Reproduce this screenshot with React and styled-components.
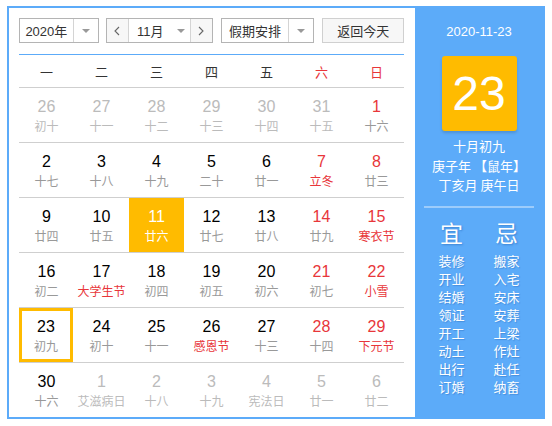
import React from "react";
import styled, { createGlobalStyle } from "styled-components";

const Global = createGlobalStyle`
  html, body { margin: 0; padding: 0; background: #fff; }
  body { padding: 6px 7px; font-family: "Liberation Sans", "Noto Sans CJK SC", sans-serif; }
`;

const BLUE = "#5cabf9";
const RED = "#e8363a";
const ORANGE = "#ffbb00";
const CJK = `"Liberation Sans", "Noto Sans CJK SC", sans-serif`;

const Widget = styled.div`
  width: 534px;
  height: 409px;
  border: 2px solid ${BLUE};
  display: flex;
  background: #fff;
`;

const Main = styled.div`
  width: 385px;
  padding: 10px 11px 0 10px;
  display: flex;
  flex-direction: column;
`;

const Toolbar = styled.div`
  display: flex;
  height: 25px;
  margin-bottom: 11px;
`;

const Select = styled.div`
  display: flex;
  width: ${(p) => p.$w}px;
  height: 25px;
  box-sizing: border-box;
  border: 1px solid #b4b4b4;
  margin-right: ${(p) => p.$mr || 0}px;
  font: 13px ${CJK};
  color: #333;
`;

const SelectText = styled.div`
  flex: 1;
  display: flex;
  align-items: center;
  justify-content: center;
`;

const ArrowBox = styled.div`
  width: 24px;
  border-left: 1px solid #d4d4d4;
  display: flex;
  align-items: center;
  justify-content: center;
`;

const Tri = styled.span`
  width: 0;
  height: 0;
  border-left: 4px solid transparent;
  border-right: 4px solid transparent;
  border-top: 4px solid #999;
  margin-left: ${(p) => p.$ml || 0}px;
`;

const Group = styled.div`
  display: flex;
  height: 25px;
  box-sizing: border-box;
  border: 1px solid #b4b4b4;
  margin-right: 8px;
  font: 13px ${CJK};
  color: #333;
`;

const NavBtn = styled.div`
  width: 21px;
  background: #f7f7f7;
  display: flex;
  align-items: center;
  justify-content: center;
  border-${(p) => (p.$side === "left" ? "right" : "left")}: 1px solid #d4d4d4;
`;

const MonthSel = styled.div`
  width: 61px;
  display: flex;
  align-items: center;
  justify-content: center;
  padding-left: 4px;
  box-sizing: border-box;
`;

const TodayBtn = styled.div`
  width: 82px;
  height: 25px;
  box-sizing: border-box;
  border: 1px solid #d0d0d0;
  background: #f7f7f7;
  display: flex;
  align-items: center;
  justify-content: center;
  font: 13px ${CJK};
  color: #333;
`;

const Header = styled.div`
  display: grid;
  grid-template-columns: repeat(7, 55px);
  height: 33px;
  border-top: 1px solid ${BLUE};
  border-bottom: 1px solid #cfcfcf;
  align-items: center;
  text-align: center;
  font: 13px ${CJK};
`;

const HeadCell = styled.div`
  color: ${(p) => (p.$red ? RED : "#333")};
`;

const Row = styled.div`
  display: grid;
  grid-template-columns: repeat(7, 55px);
  height: 54px;
  border-top: ${(p) => (p.$first ? "none" : "1px solid #cfcfcf")};
`;

const Cell = styled.div`
  box-sizing: border-box;
  height: 54px;
  width: ${(p) => (p.$today ? "54px" : "55px")};
  text-align: center;
  padding-top: ${(p) => (p.$today ? 6 : 9)}px;
  background: ${(p) => (p.$sel ? ORANGE : "transparent")};
  border: ${(p) => (p.$today ? `3px solid ${ORANGE}` : "none")};
`;

const Num = styled.div`
  font: 16px/20px "Liberation Sans", Arial, sans-serif;
  color: ${(p) => p.$c};
`;

const Lunar = styled.div`
  font: 12px/17px "Noto Sans CJK SC", sans-serif;
  color: ${(p) => p.$c};
  white-space: nowrap;
`;

const Side = styled.div`
  flex: 1;
  background: ${BLUE};
  color: #fff;
  display: flex;
  flex-direction: column;
  align-items: center;
  font-family: ${CJK};
`;

const DateText = styled.div`
  margin-top: 16px;
  font: 13px/16px "Liberation Sans", Arial, sans-serif;
`;

const BigDay = styled.div`
  margin-top: 16px;
  width: 75px;
  height: 75px;
  border-radius: 3px;
  background: ${ORANGE};
  box-shadow: 0 2px 3px rgba(0, 0, 0, 0.15);
  display: flex;
  align-items: center;
  justify-content: center;
  font: 48px/1 "Liberation Sans", Arial, sans-serif;
  color: #fff;
`;

const LunarInfo = styled.div`
  margin-top: 5px;
  font: 13px/19.5px "Noto Sans CJK SC", sans-serif;
  text-align: center;
  white-space: nowrap;
`;

const Divider = styled.div`
  margin-top: 11px;
  width: 110px;
  height: 2px;
  background: rgba(255, 255, 255, 0.4);
`;

const YiJi = styled.div`
  margin-top: 9px;
  display: grid;
  grid-template-columns: 55px 55px;
  text-align: center;
`;

const YiJiCol = styled.div`
  display: flex;
  flex-direction: column;
  align-items: center;
`;

const YiJiHead = styled.div`
  font: 23px/30px "Noto Sans CJK SC", sans-serif;
  text-shadow: 1px 1px 2px rgba(0, 60, 140, 0.35);
  margin-bottom: 5px;
`;

const YiJiItem = styled.div`
  font: 13px/18px "Noto Sans CJK SC", sans-serif;
  height: 18px;
  text-shadow: 1px 1px 1px rgba(0, 60, 140, 0.25);
`;

const Chevron = ({ dir }) => (
  <svg width="6" height="10" viewBox="0 0 6 10">
    <polyline
      points={dir === "left" ? "5,1 1,5 5,9" : "1,1 5,5 1,9"}
      fill="none"
      stroke="#666"
      strokeWidth="1.1"
    />
  </svg>
);

// [num, lunar, other, redNum, redLunar, sel, today]
const rows = [
  [["26", "初十", 1], ["27", "十一", 1], ["28", "十二", 1], ["29", "十三", 1], ["30", "十四", 1], ["31", "十五", 1], ["1", "十六", 0, 1]],
  [["2", "十七"], ["3", "十八"], ["4", "十九"], ["5", "二十"], ["6", "廿一"], ["7", "立冬", 0, 1, 1], ["8", "廿三", 0, 1]],
  [["9", "廿四"], ["10", "廿五"], ["11", "廿六", 0, 0, 0, 1], ["12", "廿七"], ["13", "廿八"], ["14", "廿九", 0, 1], ["15", "寒衣节", 0, 1, 1]],
  [["16", "初二"], ["17", "大学生节", 0, 0, 1], ["18", "初四"], ["19", "初五"], ["20", "初六"], ["21", "初七", 0, 1], ["22", "小雪", 0, 1, 1]],
  [["23", "初九", 0, 0, 0, 0, 1], ["24", "初十"], ["25", "十一"], ["26", "感恩节", 0, 0, 1], ["27", "十三"], ["28", "十四", 0, 1], ["29", "下元节", 0, 1, 1]],
  [["30", "十六"], ["1", "艾滋病日", 1], ["2", "十八", 1], ["3", "十九", 1], ["4", "宪法日", 1], ["5", "廿一", 1], ["6", "廿二", 1]],
];

const yi = ["装修", "开业", "结婚", "领证", "开工", "动土", "出行", "订婚"];
const ji = ["搬家", "入宅", "安床", "安葬", "上梁", "作灶", "赴任", "纳畜"];

export default function App() {
  return (
    <>
      <Global />
      <Widget>
        <Main>
          <Toolbar>
            <Select $w={80} $mr={7}>
              <SelectText>2020年</SelectText>
              <ArrowBox><Tri /></ArrowBox>
            </Select>
            <Group>
              <NavBtn $side="left"><Chevron dir="left" /></NavBtn>
              <MonthSel>11月<Tri $ml={14} /></MonthSel>
              <NavBtn $side="right"><Chevron dir="right" /></NavBtn>
            </Group>
            <Select $w={94} $mr={8}>
              <SelectText>假期安排</SelectText>
              <ArrowBox><Tri /></ArrowBox>
            </Select>
            <TodayBtn>返回今天</TodayBtn>
          </Toolbar>
          <Header>
            {["一", "二", "三", "四", "五", "六", "日"].map((d, i) => (
              <HeadCell key={d} $red={i >= 5}>{d}</HeadCell>
            ))}
          </Header>
          {rows.map((r, ri) => (
            <Row key={ri} $first={ri === 0}>
              {r.map(([n, l, other, rn, rl, sel, today], ci) => {
                const numC = sel ? "#fff" : other ? "#bbb" : rn ? RED : "#000";
                const lunC = sel ? "#fff" : other ? "#bbb" : rl ? RED : "#999";
                return (
                  <Cell key={ci} $sel={sel} $today={today}>
                    <Num $c={numC}>{n}</Num>
                    <Lunar $c={lunC}>{l}</Lunar>
                  </Cell>
                );
              })}
            </Row>
          ))}
        </Main>
        <Side>
          <DateText>2020-11-23</DateText>
          <BigDay>23</BigDay>
          <LunarInfo>
            十月初九<br />
            庚子年 【鼠年】<br />
            丁亥月 庚午日
          </LunarInfo>
          <Divider />
          <YiJi>
            <YiJiCol>
              <YiJiHead>宜</YiJiHead>
              {yi.map((t) => <YiJiItem key={t}>{t}</YiJiItem>)}
            </YiJiCol>
            <YiJiCol>
              <YiJiHead>忌</YiJiHead>
              {ji.map((t) => <YiJiItem key={t}>{t}</YiJiItem>)}
            </YiJiCol>
          </YiJi>
        </Side>
      </Widget>
    </>
  );
}
